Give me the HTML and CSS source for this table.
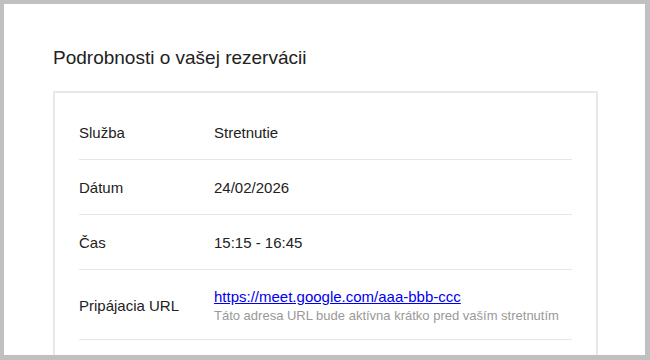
FILE: index.html
```html
<!DOCTYPE html>
<html lang="sk">
<head>
<meta charset="utf-8">
<title>Podrobnosti o vašej rezervácii</title>
<link rel="stylesheet" href="styles.css">
</head>
<body>
  <main class="page">
    <h1 class="title">Podrobnosti o vašej rezervácii</h1>
    <section class="card">
      <div class="row">
        <div class="label">Služba</div>
        <div class="value">Stretnutie</div>
      </div>
      <div class="row">
        <div class="label">Dátum</div>
        <div class="value">24/02/2026</div>
      </div>
      <div class="row">
        <div class="label">Čas</div>
        <div class="value">15:15 - 16:45</div>
      </div>
      <div class="row row-tall">
        <div class="label">Pripájacia URL</div>
        <div class="value">
          <a class="link" href="#">https://meet.google.com/aaa-bbb-ccc</a>
          <div class="hint">Táto adresa URL bude aktívna krátko pred vaším stretnutím</div>
        </div>
      </div>
      <div class="card-tail"></div>
    </section>
  </main>
</body>
</html>
```

FILE: styles.css
```css
html, body {
  margin: 0;
  height: 100%;
}

body {
  background: #c0c0c0;
  padding: 4px 5px 5px 4px;
  box-sizing: border-box;
  font-family: "Liberation Sans", Arial, sans-serif;
  color: #222;
}

.page {
  background: #fff;
  height: 351px;
  overflow: hidden;
  padding: 43px 47px 0 49px;
  box-sizing: border-box;
}

.title {
  margin: 0 0 22px;
  font-size: 19px;
  line-height: 22px;
  font-weight: normal;
  color: #222;
}

.card {
  border: 2px solid #e8e8e8;
  padding: 12px 24px 0;
}

.row {
  display: grid;
  grid-template-columns: 135px 1fr;
  align-items: center;
  padding: 19px 0 18px;
  border-bottom: 1px solid #e6e6e6;
  font-size: 15px;
  line-height: 17px;
}

.row-tall {
  padding: 18px 0 16px;
}

/* blank space below the last row, running past the bottom of the page */
.card-tail {
  height: 40px;
}

.link {
  display: block;
  color: #0000ee;
  text-decoration: underline;
}

.hint {
  margin-top: 3px;
  font-size: 13px;
  line-height: 15px;
  color: #999;
}
```
